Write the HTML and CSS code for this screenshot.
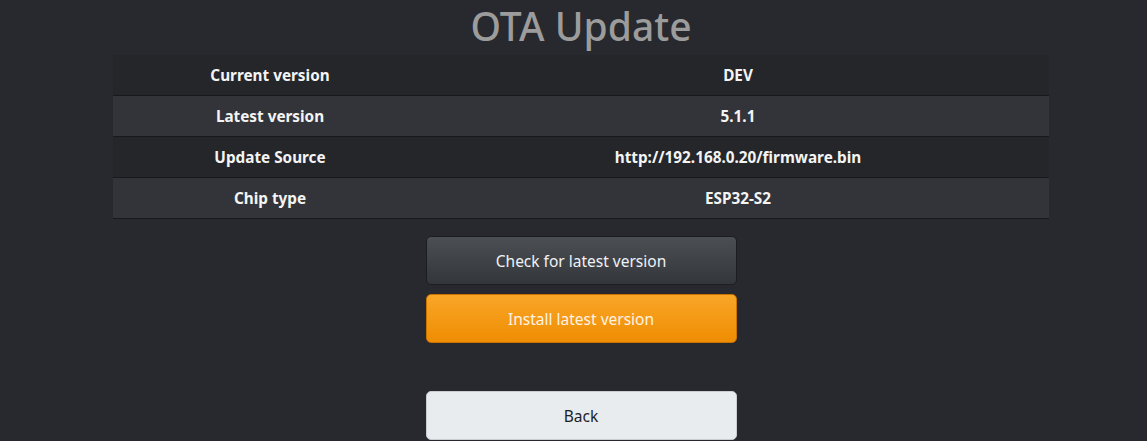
FILE: index.html
```html
<!DOCTYPE html>
<html>
<head>
<meta charset="utf-8">
<title>OTA Update</title>
<link rel="stylesheet" href="styles.css">
</head>
<body>
<div class="page">
  <h1 class="title">OTA Update</h1>
  <table class="info">
    <tr><td class="key">Current version</td><td class="val">DEV</td></tr>
    <tr><td class="key">Latest version</td><td class="val">5.1.1</td></tr>
    <tr><td class="key">Update Source</td><td class="val">http://192.168.0.20/firmware.bin</td></tr>
    <tr><td class="key">Chip type</td><td class="val">ESP32-S2</td></tr>
  </table>
  <div class="actions">
    <button class="btn btn-dark">Check for latest version</button>
    <button class="btn btn-orange">Install latest version</button>
    <button class="btn btn-light btn-back">Back</button>
  </div>
</div>
</body>
</html>
```
FILE: styles.css
```css
html, body {
  margin: 0;
  padding: 0;
  background: #27292e;
  height: 100%;
  overflow: hidden;
}
.page {
  padding-left: 15px;
  font-family: "Noto Sans", "Open Sans", sans-serif;
  display: flex;
  flex-direction: column;
  align-items: center;
}
.title {
  margin: 0;
  font-size: 39px;
  line-height: 52px;
  font-weight: 500;
  color: #9c9c9c;
  height: 55px;
}
.info {
  width: 936px;
  border-collapse: collapse;
  color: #f4f4f4;
  font-size: 15.3px;
  font-weight: 700;
}
.info td {
  height: 40px;
  padding: 0;
  text-align: center;
  border-bottom: 1px solid #18191c;
}
.info tr:nth-child(odd) td { background: #24262a; }
.info tr:nth-child(even) td { background: #323439; }
.info .key { width: 314px; }
.actions {
  display: flex;
  flex-direction: column;
  align-items: center;
  gap: 9px;
  margin-top: 17px;
}
.btn {
  box-sizing: border-box;
  width: 311px;
  height: 49px;
  border-radius: 5px;
  font-family: "Noto Sans", "Open Sans", sans-serif;
  font-size: 15.5px;
  cursor: pointer;
}
.btn-dark {
  background: linear-gradient(#4b4e53, #33363b);
  border: 1px solid #1b1d20;
  color: #eef2f6;
}
.btn-orange {
  background: linear-gradient(#f9a628, #ef8d02);
  border: 1px solid #c97400;
  color: #fff3e4;
}
.btn-light {
  background: #e8ecef;
  border: 1px solid #c9cdd1;
  color: #1c1f24;
}
.btn-back {
  margin-top: 39px;
}
```
